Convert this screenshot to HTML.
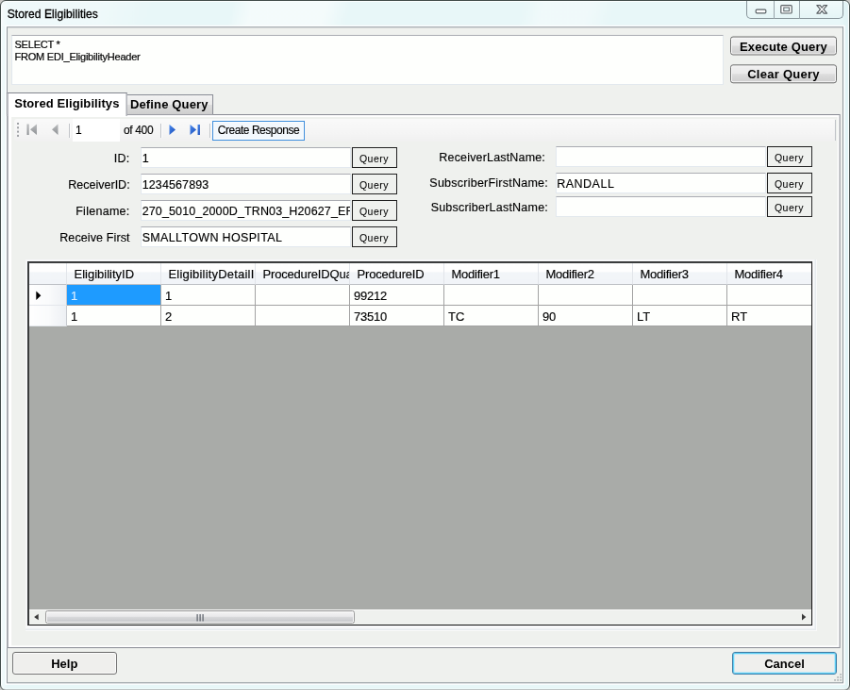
<!DOCTYPE html>
<html lang="en">
<head>
<meta charset="utf-8">
<title>Stored Eligibilities</title>
<style>
*{box-sizing:border-box;margin:0;padding:0}
html,body{width:850px;height:690px;overflow:hidden;background:#c9c9c7}
body{font-family:"Liberation Sans",sans-serif;color:#000}
#scale{position:absolute;left:0;top:0;width:901px;height:732px;transform-origin:0 0;transform:scale(0.9434);will-change:transform}
#win{position:absolute;left:0;top:0;width:901px;height:731.5px;-webkit-text-stroke-width:0.14px}
#win div,#win span,#win i,#win b,#win svg{position:absolute}
#frame{left:0;top:0;width:901px;height:731.5px;border:solid #47514f;border-width:1px 1.5px 1.6px 1.1px;border-radius:6px;
 background:linear-gradient(90deg,#f4fcfc 0,#e8f7f8 8px,#e8f7f8 99%,#dff2f4 100%);box-shadow:inset 0 0 0 1.1px #fbffff}
#tstripe{left:1.5px;top:2px;width:898px;height:26px;border-radius:5px 5px 0 0;
 background:linear-gradient(105deg,rgba(255,255,255,.3) 0,rgba(255,255,255,.3) 12%,rgba(255,255,255,0) 18%,rgba(255,255,255,0) 27%,rgba(255,255,255,.55) 29.5%,rgba(255,255,255,.55) 38%,rgba(255,255,255,0) 41%,rgba(255,255,255,0) 61%,rgba(255,255,255,.35) 63.5%,rgba(255,255,255,.35) 69%,rgba(255,255,255,0) 72%)}
#title{left:7.8px;top:4.5px;letter-spacing:0.07px;font-size:12px;line-height:20px;white-space:nowrap;-webkit-text-stroke:0.3px #000}
#caps{left:791px;top:1px;width:103px;height:19px;border:1px solid #87949a;border-top:none;border-radius:0 0 5px 5px;
 background:linear-gradient(#f2fbfb,#e5f5f6)}
#caps i{top:0;width:1px;height:19px;background:#98a4aa}
#client{left:7px;top:28px;width:887px;height:696px;border:1px solid #8f989d;background:#eff1ee;transform:translate(0,0.3px);box-shadow:0 0 0 1.6px rgba(255,255,255,.85)}

/* generic controls */
.tb{background:#fefffd;border:1px solid #e3e9ef;border-top-color:#abadb3;font-size:12.5px;line-height:20px;white-space:nowrap;overflow:hidden}
.tb span{left:0.7px;top:0.6px}
.lbl{font-size:12.5px;line-height:16px;white-space:nowrap;text-align:right}
.q{-webkit-text-stroke-width:0.05px;background:#eff1ee;border:1px solid #222;font-size:10.5px;letter-spacing:0.5px;line-height:22px;text-align:center;text-indent:-1px}
.btn{-webkit-text-stroke-width:0;border:1px solid #707070;border-radius:3px;background:linear-gradient(#f2f2f2 0,#ebebeb 48%,#dddddd 52%,#cfcfcf 100%);
 box-shadow:inset 0 0 0 1px #fcfcfc;font-weight:bold;font-size:13px;text-align:center;white-space:nowrap}

/* tabs */
#page{left:8px;top:121px;width:883px;height:566px;border:1px solid #898c95;background:#eff1ee;box-shadow:inset 3.6px 2px 0 #fff,inset -2px -1.8px 0 #fff;transform:translateX(-0.4px)}
#tab1{-webkit-text-stroke-width:0;left:8px;top:98px;width:126.5px;height:24.6px;letter-spacing:0.08px;transform:translateX(-0.4px);border:1px solid #898c95;border-bottom:none;background:#fff;font-weight:bold;font-size:13px;line-height:21px;text-align:center;white-space:nowrap}
#tab2{-webkit-text-stroke-width:0;left:134px;top:100px;width:91.5px;height:21px;letter-spacing:0.15px;border:1px solid #898c95;border-left:none;border-bottom:none;background:linear-gradient(#f2f2f2 0,#ebebeb 50%,#dddddd 50%,#cfcfcf 100%);font-weight:bold;font-size:13px;line-height:20px;text-align:center;white-space:nowrap}
/* toolstrip */
#ts{left:15px;top:125px;width:870.5px;height:25.5px}
#tsbg{left:-0.5px;top:0.8px;width:871px;height:23.8px;border-radius:3px;background:linear-gradient(#fafafa 0,#f6f6f6 50%,#f1f1f1 100%)}
#ts .sep{width:1px;height:15px;top:5.5px;background:#c3c6ca;box-shadow:1px 0 0 #fdfdfd}
#ts .t{font-size:12px;line-height:24px;white-space:nowrap;top:0.5px}
#pos{left:62px;top:0.5px;width:49.5px;height:24px;background:#fff}
#cr{left:210px;top:2.5px;width:98px;height:21.5px;border:1px solid #3c8ddc;background:#f3f8fd;box-shadow:inset 0 0 0 1px #fbfdff;font-size:12px;line-height:19px;text-align:center;white-space:nowrap}
/* grid */
#grid{left:29px;top:277px;width:832px;height:386px;border:solid #3a3c3d;border-width:2px 1px 1px 2px;border-right-color:#111;border-bottom-color:#111;background:#a9aba8;overflow:hidden}
#gring{left:26.5px;top:274.5px;width:839.5px;height:394px;background:#f7f8f9;border:solid #fafafa;border-width:0 1.5px 1.5px 0;box-shadow:inset -1.5px -1.5px 0 0 #e8ecef}
#gi{left:0;top:0;width:900px;height:384px;transform:translateX(0)}
#grid .h{top:0;height:23px;background:linear-gradient(#ffffff 0,#fefefe 40%,#f3f6f9 45%,#f1f4f8 100%);border-right:1px solid #e2e5ea;border-bottom:1px solid #bcbfc4;font-size:13px;line-height:22px;white-space:nowrap;overflow:hidden}
#grid .h span{left:7.5px;top:1px}
#grid .c{height:22px;background:#fefffd;border-right:1px solid #a3a3a3;border-bottom:1px solid #a3a3a3;font-size:13px;line-height:22px;white-space:nowrap;overflow:hidden}
#grid .c span{left:4px;top:0.5px}
#grid .rh{left:-1px;width:41px;height:22px;background:linear-gradient(90deg,#ffffff 0,#fafbfc 55%,#edf0f4 100%);border-right:1px solid #c6c9ce;border-bottom:1px solid #e4e7ec}
#hs{left:0;top:366.5px;width:829px;height:17px;background:#eff1ee;border-top:1px solid #fbfbfb}
#thumb{left:17px;top:0.5px;width:328px;height:14px;border:1px solid #989898;border-radius:2.5px;background:linear-gradient(#f5f5f5 0,#e9e9eb 45%,#d9dadc 50%,#c5c6c9 100%);box-shadow:inset 0 0 0 1px #fbfbfb}
</style>
</head>
<body>
<div id="scale">
<div id="win">
  <div id="frame"></div>
  <div id="tstripe"></div>
  <div id="title">Stored Eligibilities</div>
  <div id="caps"><i style="left:28px"></i><i style="left:55px"></i>
    <svg style="left:0;top:-1px" width="103" height="20" viewBox="0 0 103 20">
      <rect x="9.2" y="10.2" width="10.6" height="3.6" rx="1" fill="#fff" stroke="#5b6266" stroke-width="1.2"/>
      <rect x="35.8" y="5.6" width="11.4" height="8.4" rx="1" fill="#fff" stroke="#5b6266" stroke-width="1.2"/>
      <rect x="38.8" y="8" width="5.6" height="3.8" fill="#e8f7f8" stroke="#5b6266" stroke-width="1"/>
      <path d="M73.8 5.6h3.4l2 2.5 2-2.5h3.4l-3.7 4.2 3.7 4.3h-3.4l-2-2.6-2 2.6h-3.4l3.7-4.3z" fill="#fff" stroke="#5b6266" stroke-width="1.2" stroke-linejoin="round"/>
    </svg>
  </div>
  <div id="client"></div>

  <!-- SQL text box and buttons -->
  <div class="tb" id="sql" style="left:12px;top:37px;width:754.5px;height:52.5px;font-size:11px;line-height:13px;border-color:#abadb3 #e3e9ef #e3e9ef #e3e9ef">
    <span style="left:2.5px;top:3px;letter-spacing:-0.22px;-webkit-text-stroke:0.2px #000">SELECT *<br>FROM EDI_EligibilityHeader</span></div>
  <div class="btn" id="bexec" style="left:774px;top:38px;width:113px;height:20.4px;line-height:19.8px;letter-spacing:0.15px;transform:translateY(0.5px)">Execute Query</div>
  <div class="btn" id="bclear" style="left:774px;top:68px;width:113px;height:20.4px;line-height:19.8px;letter-spacing:0.27px;transform:translateY(0.3px)">Clear Query</div>

  <!-- tab control -->
  <div id="page"></div>
  <div id="tab2">Define Query</div>
  <div id="tab1">Stored Eligibilitys</div>

  <!-- binding navigator tool strip -->
  <div id="ts">
    <div id="tsbg"></div>
    <svg style="left:0;top:0" width="230" height="26" viewBox="0 0 230 26">
      <g fill="#a0a3a7"><rect x="3" y="5" width="2" height="2"/><rect x="3" y="9.3" width="2" height="2"/><rect x="3" y="13.6" width="2" height="2"/><rect x="3" y="17.9" width="2" height="2"/></g>
      <g fill="url(#gr)"><rect x="13.5" y="6.5" width="2.2" height="11.5"/><path d="M24 6.5v11.5l-7-5.75z"/>
        <path d="M46.5 6.5v11.5l-6.5-5.75z"/></g>
      <defs><linearGradient id="bl" x1="0" x2="1" y1="0" y2="1"><stop offset="0" stop-color="#4d8df0"/><stop offset="1" stop-color="#1446b4"/></linearGradient><linearGradient id="gr" x1="0" x2="0" y1="0" y2="1"><stop offset="0" stop-color="#b9bbbd"/><stop offset="1" stop-color="#909396"/></linearGradient></defs><g fill="url(#bl)"><path d="M164.5 7l6.5 5.5-6.5 5.5z"/><path d="M186.5 7l6.5 5.5-6.5 5.5z"/><rect x="194.5" y="7" width="2.4" height="11"/></g>
    </svg>
    <div class="sep" style="left:58px"></div>
    <div id="pos"><span class="t" style="left:3px;top:0.5px">1</span></div>
    <span class="t" id="of400" style="left:116px;letter-spacing:-0.36px">of 400</span>
    <div class="sep" style="left:155px"></div>
    <div class="sep" style="left:207px"></div>
    <div id="cr" style="letter-spacing:-0.46px">Create Response</div>
    <i style="left:870px;top:2px;width:1px;height:22px;background:#bfc3c8"></i>
  </div>

  <!-- left column fields -->
  <span class="lbl" id="l1" style="right:763.4px;top:159.5px;letter-spacing:0.27px">ID:</span>
  <span class="lbl" id="l2" style="right:763.4px;top:187.5px">ReceiverID:</span>
  <span class="lbl" id="l3" style="right:763.4px;top:215.5px;letter-spacing:0.28px">Filename:</span>
  <span class="lbl" id="l4" style="right:763.4px;top:243.5px;letter-spacing:0.11px">Receive First</span>
  <div class="tb" id="t1" style="left:149px;top:156px;width:223px;height:22px"><span>1</span></div>
  <div class="tb" id="t2" style="left:149px;top:184px;width:223px;height:22px"><span style="letter-spacing:0.12px">1234567893</span></div>
  <div class="tb" id="t3" style="left:149px;top:212px;width:223px;height:22px"><span style="letter-spacing:0.13px">270_5010_2000D_TRN03_H20627_ER</span></div>
  <div class="tb" id="t4" style="left:149px;top:240px;width:223px;height:22px"><span style="letter-spacing:0.34px">SMALLTOWN HOSPITAL</span></div>
  <div class="q" style="left:373px;top:156px;width:48px;height:22px">Query</div>
  <div class="q" style="left:373px;top:184px;width:48px;height:22px">Query</div>
  <div class="q" style="left:373px;top:212px;width:48px;height:22px">Query</div>
  <div class="q" style="left:373px;top:240px;width:48px;height:22px">Query</div>

  <!-- right column fields -->
  <span class="lbl" id="r1" style="right:323px;top:158.5px;letter-spacing:0.17px">ReceiverLastName:</span>
  <span class="lbl" id="r2" style="right:320px;top:186px;letter-spacing:0.24px">SubscriberFirstName:</span>
  <span class="lbl" id="r3" style="right:320px;top:211.5px;letter-spacing:0.22px">SubscriberLastName:</span>
  <div class="tb" id="u1" style="left:588.5px;top:155px;width:223.5px;height:22px"></div>
  <div class="tb" id="u2" style="left:588.5px;top:183px;width:223.5px;height:22px"><span style="letter-spacing:0.5px">RANDALL</span></div>
  <div class="tb" id="u3" style="left:588.5px;top:208px;width:223.5px;height:22px"></div>
  <div class="q" style="left:813px;top:155px;width:48px;height:22px">Query</div>
  <div class="q" style="left:813px;top:183px;width:48px;height:22px">Query</div>
  <div class="q" style="left:813px;top:208px;width:48px;height:22px">Query</div>

  <!-- data grid -->
  <div id="gring"></div>
  <div id="grid">
    <div id="gi">
    <div class="h" style="left:-1px;width:41px"></div>
    <div class="h" style="left:40px;width:100px"><span>EligibilityID</span></div>
    <div class="h" style="left:140px;width:100px"><span style="letter-spacing:0.2px">EligibilityDetailID</span></div>
    <div class="h" style="left:240px;width:100px"><span style="letter-spacing:-0.18px">ProcedureIDQualifier</span></div>
    <div class="h" style="left:340px;width:100px"><span style="letter-spacing:-0.18px">ProcedureID</span></div>
    <div class="h" style="left:440px;width:100px"><span style="letter-spacing:-0.25px">Modifier1</span></div>
    <div class="h" style="left:540px;width:100px"><span style="letter-spacing:-0.25px">Modifier2</span></div>
    <div class="h" style="left:640px;width:100px"><span style="letter-spacing:-0.25px">Modifier3</span></div>
    <div class="h" style="left:740px;width:100px"><span style="letter-spacing:-0.25px">Modifier4</span></div>

    <div class="rh" style="top:23px"><svg style="left:8px;top:5.5px" width="8" height="11" viewBox="0 0 8 11"><path d="M0.3 0.5l5 4.8-5 4.8z" fill="#000"/></svg></div>
    <div class="c" style="left:40px;top:23px;width:100px;background:#1e9bff;color:#dcefff"><span>1</span></div>
    <div class="c" style="left:140px;top:23px;width:100px"><span>1</span></div>
    <div class="c" style="left:240px;top:23px;width:100px"></div>
    <div class="c" style="left:340px;top:23px;width:100px"><span style="letter-spacing:-0.2px">99212</span></div>
    <div class="c" style="left:440px;top:23px;width:100px"></div>
    <div class="c" style="left:540px;top:23px;width:100px"></div>
    <div class="c" style="left:640px;top:23px;width:100px"></div>
    <div class="c" style="left:740px;top:23px;width:100px"></div>

    <div class="rh" style="top:45px"></div>
    <div class="c" style="left:40px;top:45px;width:100px"><span>1</span></div>
    <div class="c" style="left:140px;top:45px;width:100px"><span>2</span></div>
    <div class="c" style="left:240px;top:45px;width:100px"></div>
    <div class="c" style="left:340px;top:45px;width:100px"><span style="letter-spacing:-0.2px">73510</span></div>
    <div class="c" style="left:440px;top:45px;width:100px"><span>TC</span></div>
    <div class="c" style="left:540px;top:45px;width:100px"><span style="letter-spacing:-0.2px">90</span></div>
    <div class="c" style="left:640px;top:45px;width:100px"><span>LT</span></div>
    <div class="c" style="left:740px;top:45px;width:100px"><span>RT</span></div>
    </div>
    <div id="hs">
      <svg style="left:0;top:0" width="831" height="16" viewBox="0 0 831 16">
        <path d="M9.7 3.7v6.6l-4.5-3.3z" fill="#3a3a3a"/><path d="M819 3.5v7l4.3-3.5z" fill="#3a3a3a"/>
      </svg>
      <div id="thumb"><svg style="left:159px;top:2.5px" width="9" height="8" viewBox="0 0 9 8"><g fill="#5b6068"><rect x="0.5" y="0" width="1.2" height="7.5"/><rect x="3.5" y="0" width="1.2" height="7.5"/><rect x="6.5" y="0" width="1.2" height="7.5"/></g></svg></div>
    </div>
  </div>

  <!-- bottom buttons -->
  <div class="btn" id="bhelp" style="left:12.5px;top:691px;width:111.5px;height:24px;line-height:23px;background:#efefed">Help</div>
  <div class="btn" id="bcancel" style="left:776px;top:691px;width:111px;height:24px;line-height:23px;background:#efefed;border-color:#3f7ea8;box-shadow:inset 0 0 0 1px #5fd0f5,inset 0 0 0 2px #c4e9f7">Cancel</div>
  <svg style="left:882px;top:712px" width="12" height="12" viewBox="0 0 12 12"><g fill="#b4b8ba"><rect x="8.2" y="2" width="1.8" height="1.8"/><rect x="5.2" y="5" width="1.8" height="1.8"/><rect x="8.2" y="5" width="1.8" height="1.8"/><rect x="2.2" y="8" width="1.8" height="1.8"/><rect x="5.2" y="8" width="1.8" height="1.8"/><rect x="8.2" y="8" width="1.8" height="1.8"/></g></svg>
</div>
</div>
</body>
</html>
